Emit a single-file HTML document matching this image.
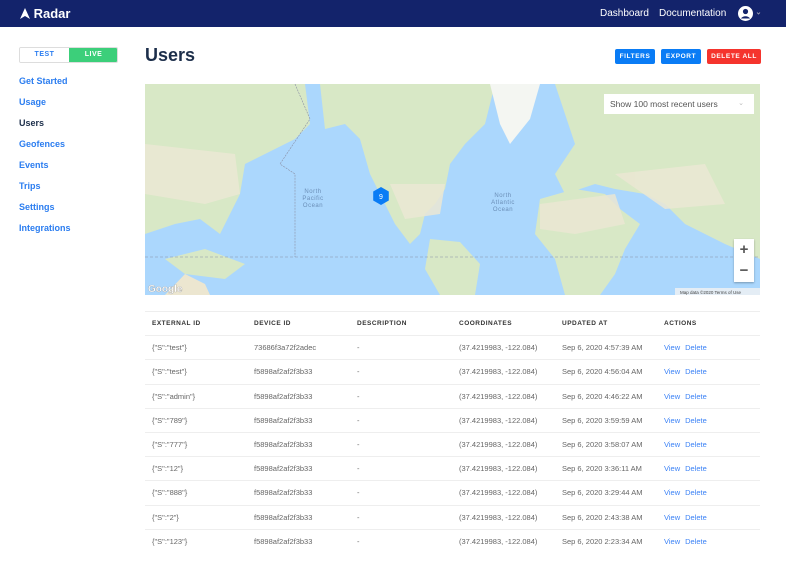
<!DOCTYPE html>
<html><head><meta charset="utf-8"><style>
*{box-sizing:border-box;margin:0;padding:0}
body{width:786px;height:573px;overflow:hidden;background:#fff;font-family:"Liberation Sans",sans-serif;position:relative}
.top{position:absolute;left:0;top:0;width:786px;height:27px;background:#13236b}
.logo{position:absolute;left:20px;top:6px;color:#fff;font-weight:bold;font-size:13px}
.nav{position:absolute;top:8px;color:#fff;font-size:10px}
.tog{position:absolute;left:19px;top:47px;width:99px;height:16px;border:1px solid #ddd;border-radius:2px;overflow:hidden;font-size:7px;font-weight:bold;letter-spacing:.5px}
.tog div{position:absolute;top:0;height:14px;line-height:14px;text-align:center;width:49px}
.side a{position:absolute;left:19px;font-size:9px;font-weight:bold;color:#2b7df0;text-decoration:none}
h1{position:absolute;left:145px;top:45px;font-size:18px;color:#1c2e4a;font-weight:bold}
.btn{position:absolute;top:49px;height:15px;line-height:15px;color:#fff;font-size:6.5px;font-weight:bold;letter-spacing:.6px;text-align:center;border-radius:2px}
.map{position:absolute;left:145px;top:84px;width:615px;height:211px;background:#abd7fd;overflow:hidden}
table{position:absolute;left:145px;top:311px;width:615px;border-collapse:collapse;font-size:7.5px;color:#666}
td,th{height:24.2px;border-top:1px solid #eee;text-align:left;padding-left:7px;font-weight:normal}
th{font-size:6.5px;font-weight:bold;color:#333;letter-spacing:.5px}
td a{color:#3b82f6;margin-right:5px}
</style></head><body>
<div class="top"></div>
<div class="logo"><svg width="10" height="11" viewBox="0 0 10 11" style="vertical-align:-1px"><path d="M5 0L10 11L5 8L0 11Z" fill="#fff"/></svg> Radar</div>
<div class="nav" style="left:600px">Dashboard</div>
<div class="nav" style="left:659px">Documentation</div>
<svg style="position:absolute;left:738px;top:6px" width="26" height="15" viewBox="0 0 26 15"><circle cx="7.5" cy="7.5" r="7.5" fill="#fff"/><circle cx="7.5" cy="5.5" r="2.6" fill="#13236b"/><path d="M3 12.5a5 4 0 0 1 9 0" fill="#13236b"/><path d="M19 6.5l1.5 1.5l1.5-1.5" stroke="#aab" fill="none" stroke-width=".8"/></svg>
<div class="tog"><div style="left:0;color:#2b7df0;background:#fff">TEST</div><div style="left:49px;width:49px;background:#3ccf7a;color:#fff">LIVE</div></div>
<div class="side">
<a style="top:76px">Get Started</a><a style="top:97px">Usage</a><a style="top:118px;color:#1c2e4a">Users</a><a style="top:139px">Geofences</a><a style="top:160px">Events</a><a style="top:181px">Trips</a><a style="top:202px">Settings</a><a style="top:223px">Integrations</a>
</div>
<h1>Users</h1>
<div class="btn" style="left:615px;width:40px;background:#0a7cf5">FILTERS</div>
<div class="btn" style="left:661px;width:40px;background:#0a7cf5">EXPORT</div>
<div class="btn" style="left:707px;width:54px;background:#f5342d">DELETE ALL</div>
<div class="map">
<svg width="615" height="211" viewBox="0 0 615 211">
<g fill="#d8e8c6">
<path d="M0 0H160L165 40L150 55L120 70L100 80L95 110L85 130L75 150L55 135L30 140L0 150Z"/>
<path d="M175 0H350L340 40L320 60L305 80L300 105L290 120L280 130L275 150L265 160L250 140L240 120L225 90L215 55L200 40L180 45Z"/>
<path d="M345 0H395L385 35L365 60L355 40Z" fill="#f4f6f2"/>
<path d="M410 0H615V175L580 160L560 150L540 140L520 120L500 110L470 105L450 100L420 110L410 90L430 60L420 30Z"/>
<path d="M395 115L430 105L460 110L475 125L495 140L480 165L470 190L455 211H420L410 175L390 150Z"/>
<path d="M285 155L315 158L335 180L330 211H295L280 185Z"/>
<path d="M20 175L60 165L100 180L80 195L40 190Z"/>
<path d="M20 211L40 190L60 200L65 211Z" fill="#ece6d0"/>
</g>
<g fill="#ebe7d3" opacity=".85"><path d="M0 60L90 70L95 110L60 120L0 110Z"/><path d="M245 100L300 100L295 130L260 135Z"/><path d="M395 120L470 110L480 140L430 150L395 145Z"/><path d="M470 90L560 80L580 120L520 125Z"/></g>
<path d="M0 173H615" stroke="#8a8fa5" stroke-width=".6" stroke-dasharray="3 2"/>
<path d="M150 0L165 35L135 80L150 90V173" stroke="#8a8fa5" stroke-width=".6" stroke-dasharray="2 1" fill="none"/>
<path d="M236 103l7.8 4.5v9l-7.8 4.5l-7.8-4.5v-9z" fill="#0a7cf5"/>
<text x="236" y="115" fill="#fff" font-size="7" text-anchor="middle" font-family="Liberation Sans">9</text>
<g fill="#6b8fb8" font-size="6" text-anchor="middle" font-family="Liberation Sans" letter-spacing=".5"><text x="168" y="109">North</text><text x="168" y="116">Pacific</text><text x="168" y="123">Ocean</text><text x="358" y="113">North</text><text x="358" y="120">Atlantic</text><text x="358" y="127">Ocean</text></g>
<text x="3" y="208" fill="#fff" font-size="10" font-family="Liberation Sans" font-weight="bold" stroke="#999" stroke-width=".3">Google</text>
<rect x="530" y="204" width="85" height="7" fill="#f3f3f3" opacity=".8"/>
<text x="535" y="210" font-size="4.5" fill="#444">Map data ©2020    Terms of Use</text>
</svg>
<div style="position:absolute;left:459px;top:10px;width:150px;height:20px;background:#fff;font-size:8.5px;color:#555;line-height:20px;padding-left:6px">Show 100 most recent users<span style="position:absolute;right:10px;color:#bbb;font-size:7px">⌄</span></div>
<div style="position:absolute;left:589px;top:155px;width:20px;height:43px;background:#fff;box-shadow:0 1px 2px rgba(0,0,0,.3);text-align:center;font-size:15px;color:#555;line-height:21px;font-weight:bold">+<br>−</div>
</div>
<table>
<tr><th style="width:102px">EXTERNAL ID</th><th style="width:103px">DEVICE ID</th><th style="width:102px">DESCRIPTION</th><th style="width:103px">COORDINATES</th><th style="width:102px">UPDATED AT</th><th>ACTIONS</th></tr>
<tr><td>{"S":"test"}</td><td>73686f3a72f2adec</td><td>-</td><td>(37.4219983, -122.084)</td><td>Sep 6, 2020 4:57:39 AM</td><td><a>View</a><a>Delete</a></td></tr>
<tr><td>{"S":"test"}</td><td>f5898af2af2f3b33</td><td>-</td><td>(37.4219983, -122.084)</td><td>Sep 6, 2020 4:56:04 AM</td><td><a>View</a><a>Delete</a></td></tr>
<tr><td>{"S":"admin"}</td><td>f5898af2af2f3b33</td><td>-</td><td>(37.4219983, -122.084)</td><td>Sep 6, 2020 4:46:22 AM</td><td><a>View</a><a>Delete</a></td></tr>
<tr><td>{"S":"789"}</td><td>f5898af2af2f3b33</td><td>-</td><td>(37.4219983, -122.084)</td><td>Sep 6, 2020 3:59:59 AM</td><td><a>View</a><a>Delete</a></td></tr>
<tr><td>{"S":"777"}</td><td>f5898af2af2f3b33</td><td>-</td><td>(37.4219983, -122.084)</td><td>Sep 6, 2020 3:58:07 AM</td><td><a>View</a><a>Delete</a></td></tr>
<tr><td>{"S":"12"}</td><td>f5898af2af2f3b33</td><td>-</td><td>(37.4219983, -122.084)</td><td>Sep 6, 2020 3:36:11 AM</td><td><a>View</a><a>Delete</a></td></tr>
<tr><td>{"S":"888"}</td><td>f5898af2af2f3b33</td><td>-</td><td>(37.4219983, -122.084)</td><td>Sep 6, 2020 3:29:44 AM</td><td><a>View</a><a>Delete</a></td></tr>
<tr><td>{"S":"2"}</td><td>f5898af2af2f3b33</td><td>-</td><td>(37.4219983, -122.084)</td><td>Sep 6, 2020 2:43:38 AM</td><td><a>View</a><a>Delete</a></td></tr>
<tr><td>{"S":"123"}</td><td>f5898af2af2f3b33</td><td>-</td><td>(37.4219983, -122.084)</td><td>Sep 6, 2020 2:23:34 AM</td><td><a>View</a><a>Delete</a></td></tr>
</table>
</body></html>
